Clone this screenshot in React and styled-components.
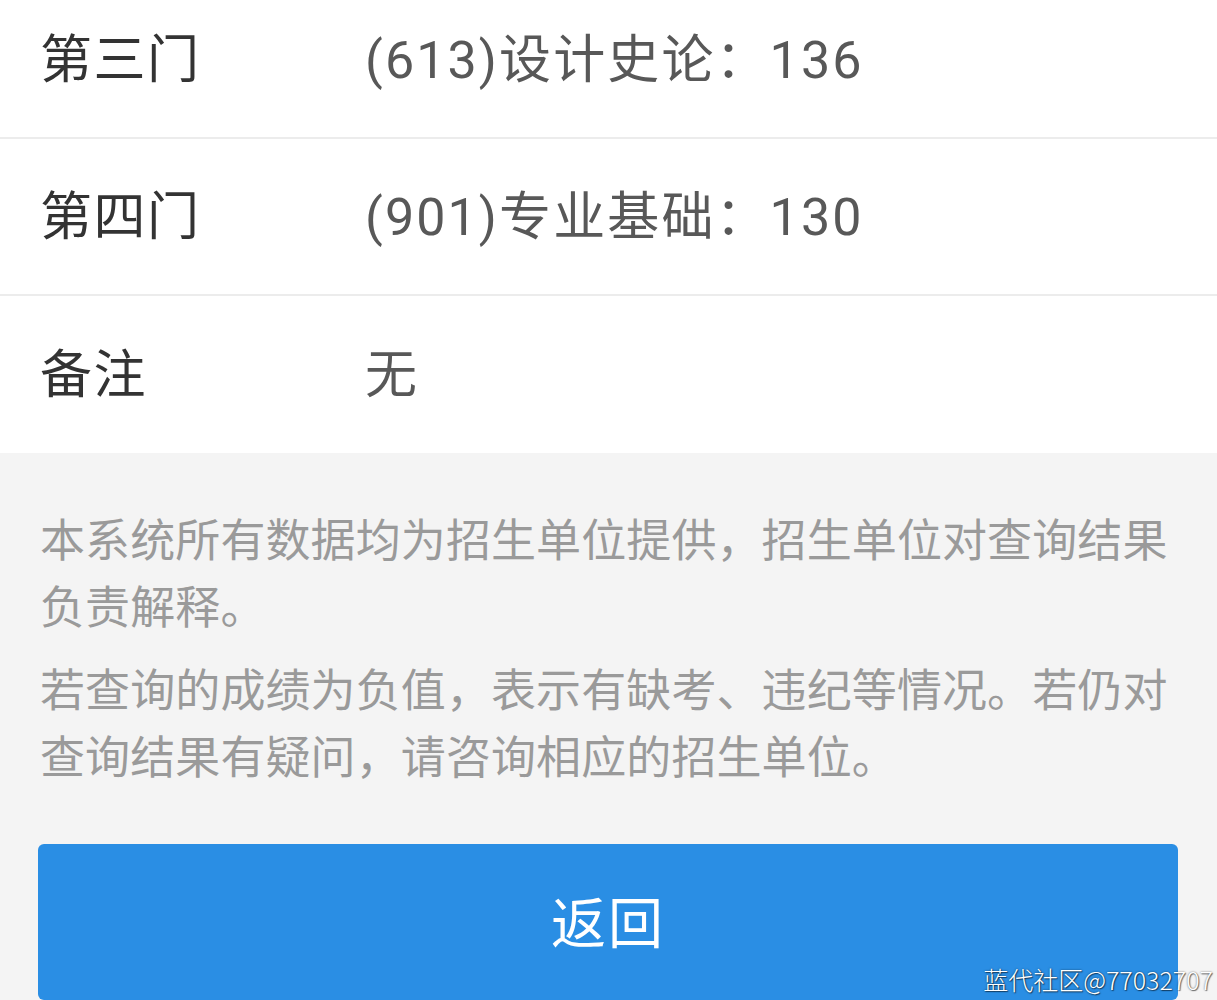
import React from 'react';
import styled, { createGlobalStyle } from 'styled-components';

const GlobalStyle = createGlobalStyle`
  html, body {
    margin: 0;
    padding: 0;
    background: #f4f4f4;
    overflow: hidden;
  }
  body {
    font-family: Roboto, "Noto Sans CJK SC", sans-serif;
  }
`;

const Page = styled.div`
  position: relative;
  width: 1217px;
  height: 1000px;
  overflow: hidden;
  background: #f4f4f4;
`;

const InfoList = styled.div`
  background: #fff;
  margin-top: -18px;
`;

const InfoRow = styled.div`
  display: flex;
  align-items: center;
  height: 157px;
  padding: 0 40px 8px;
  box-sizing: border-box;
  border-bottom: ${props => (props.last ? 'none' : '2px solid #ececec')};
`;

const Label = styled.div`
  width: 325px;
  font-size: 52px;
  color: #333;
  letter-spacing: 1.5px;
`;

const Value = styled.div`
  font-size: 52px;
  color: #585858;
  letter-spacing: 2.1px;
`;

const Notes = styled.div`
  padding: 55px 40px 0;
`;

const Note = styled.p`
  margin: 0 0 16px;
  font-size: 45px;
  line-height: 67px;
  color: #9a9a9a;
  letter-spacing: 0.1px;
`;

const BackButton = styled.button`
  display: block;
  width: calc(100% - 77px);
  height: 156px;
  margin: 52px 39px 0 38px;
  border: none;
  border-radius: 6px;
  background: #2a8ee4;
  color: #fff;
  font-family: Roboto, "Noto Sans CJK SC", sans-serif;
  font-size: 55px;
  letter-spacing: 2px;
  padding: 0 0 6px;
`;

const Watermark = styled.div`
  position: absolute;
  right: 4px;
  bottom: 3px;
  font-family: "Noto Sans CJK SC", sans-serif;
  font-size: 25px;
  font-weight: 300;
  color: #fff;
  text-shadow: 0 0 2px rgba(0, 0, 0, 0.6), 1px 1px 1px rgba(0, 0, 0, 0.5);
`;

const ROWS = [
  { label: '第三门', value: '(613)设计史论：136' },
  { label: '第四门', value: '(901)专业基础：130' },
  { label: '备注', value: '无' },
];

function App() {
  return (
    <Page>
      <GlobalStyle />
      <InfoList>
        {ROWS.map((row, i) => (
          <InfoRow key={row.label} last={i === ROWS.length - 1}>
            <Label>{row.label}</Label>
            <Value>{row.value}</Value>
          </InfoRow>
        ))}
      </InfoList>
      <Notes>
        <Note>本系统所有数据均为招生单位提供，招生单位对查询结果负责解释。</Note>
        <Note>若查询的成绩为负值，表示有缺考、违纪等情况。若仍对查询结果有疑问，请咨询相应的招生单位。</Note>
      </Notes>
      <BackButton>返回</BackButton>
      <Watermark>蓝代社区@77032707</Watermark>
    </Page>
  );
}

export default App;
